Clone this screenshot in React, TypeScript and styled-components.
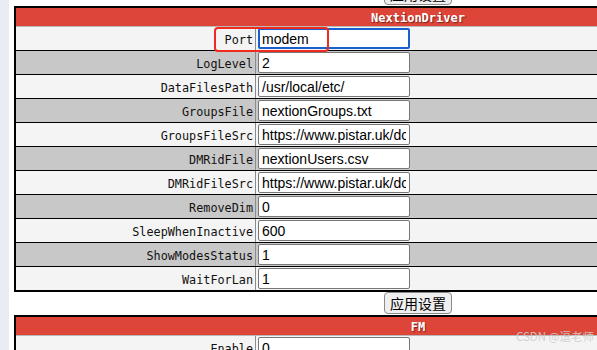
import React from 'react';
import styled, { createGlobalStyle } from 'styled-components';

type Field = { label: string; value: string; focused?: boolean; marked?: boolean };

const nextionFields: Field[] = [
  { label: 'Port', value: 'modem', focused: true, marked: true },
  { label: 'LogLevel', value: '2' },
  { label: 'DataFilesPath', value: '/usr/local/etc/' },
  { label: 'GroupsFile', value: 'nextionGroups.txt' },
  { label: 'GroupsFileSrc', value: 'https://www.pistar.uk/downloads/groups.txt' },
  { label: 'DMRidFile', value: 'nextionUsers.csv' },
  { label: 'DMRidFileSrc', value: 'https://www.pistar.uk/downloads/nextionUsers.csv' },
  { label: 'RemoveDim', value: '0' },
  { label: 'SleepWhenInactive', value: '600' },
  { label: 'ShowModesStatus', value: '1' },
  { label: 'WaitForLan', value: '1' },
];

const fmFields: Field[] = [
  { label: 'Enable', value: '0' },
  { label: 'Callsign', value: 'M1ABC' },
  { label: 'CallsignSpeed', value: '20' },
];

const ConfigTable = ({ title, fields }: { title: string; fields: Field[] }) => (
  <Table>
    <TableHeader>{title}</TableHeader>
    {fields.map((f, i) => (
      <Row key={f.label} $alt={i % 2 === 1} $first={i === 0}>
        <Label>{f.label}</Label>
        <Cell>
          <Input readOnly defaultValue={f.value} $focused={!!f.focused} />
        </Cell>
        {f.marked && <Mark />}
      </Row>
    ))}
  </Table>
);

const App = () => (
  <>
    <GlobalStyle />
    <Page>
      <Strip />
      <Content>
        <ApplyButton>应用设置</ApplyButton>
        <ConfigTable title="NextionDriver" fields={nextionFields} />
        <ApplyButton>应用设置</ApplyButton>
        <ConfigTable title="FM" fields={fmFields} />
      </Content>
      <Watermark>CSDN @逗老师</Watermark>
    </Page>
  </>
);

export default App;

const GlobalStyle = createGlobalStyle`
  html, body {
    margin: 0;
    padding: 0;
    background: #ffffff;
    overflow: hidden;
  }
`;

const Page = styled.div`
  position: relative;
  display: flex;
  width: 597px;
  height: 350px;
  overflow: hidden;
`;

const Strip = styled.div`
  flex: 0 0 9px;
  background: #e9edf3;
`;

const Content = styled.div`
  flex: 0 0 808px;
  margin-top: -17px;
  padding-left: 5px;
  display: flex;
  flex-direction: column;
  align-items: center;
`;

const ApplyButton = styled.button`
  height: 25px;
  width: 68px;
  margin: 0 0 1px 0;
  padding: 0;
  border: 1px solid #8a8a8a;
  border-radius: 4px;
  background: #efefef;
  color: #000;
  font-family: 'Noto Sans CJK SC', sans-serif;
  font-size: 14px;
  line-height: 20px;
`;

const Table = styled.div`
  width: 808px;
  box-sizing: border-box;
  border: 2px solid #000;
  flex-shrink: 0;
`;

const TableHeader = styled.div`
  height: 18px;
  line-height: 20px;
  background: #dc4537;
  border-bottom: 1px solid #b9b9b9;
  color: #fff;
  text-align: center;
  font-family: 'DejaVu Sans Mono', monospace;
  font-size: 12px;
  font-weight: bold;
  text-shadow: 1px 1px 1px rgba(0, 0, 0, 0.45);
`;

const Row = styled.div<{ $alt: boolean; $first: boolean }>`
  position: relative;
  display: grid;
  grid-template-columns: 240px 1fr;
  height: 23px;
  background: ${(p) => (p.$alt ? '#c8c8c8' : '#f4f4f4')};
  border-top: ${(p) => (p.$first ? 'none' : '1px solid #000')};
`;

const Label = styled.div`
  box-sizing: border-box;
  height: 23px;
  display: flex;
  align-items: center;
  justify-content: flex-end;
  padding: 3px 2px 0 0;
  border-right: 1px solid #8c8c8c;
  font-family: 'DejaVu Sans Mono', monospace;
  font-size: 11.8px;
  color: #111;
  white-space: nowrap;
`;

const Cell = styled.div`
  display: flex;
  align-items: center;
  padding-left: 2px;
`;

const Input = styled.input<{ $focused: boolean }>`
  box-sizing: border-box;
  width: 152px;
  height: 21px;
  margin: 0;
  padding: 1px ${(p) => (p.$focused ? '2px' : '3px')} 0;
  border: ${(p) => (p.$focused ? '2px solid #1a5fd0' : '1px solid #767676')};
  border-radius: 2px;
  background: #fff;
  color: #000;
  font-family: 'Liberation Sans', Arial, sans-serif;
  font-size: 14px;
  outline: none;
`;

const Mark = styled.div`
  position: absolute;
  z-index: 2;
  left: 198px;
  top: 0;
  width: 115px;
  height: 25px;
  box-sizing: border-box;
  border: 2px solid #f02a1e;
  border-radius: 4px;
  pointer-events: none;
`;

const Watermark = styled.div`
  position: absolute;
  right: 3px;
  bottom: 7px;
  color: rgba(205, 205, 205, 0.9);
  font-family: 'Noto Sans CJK SC', sans-serif;
  font-size: 11.5px;
  line-height: 14px;
`;
